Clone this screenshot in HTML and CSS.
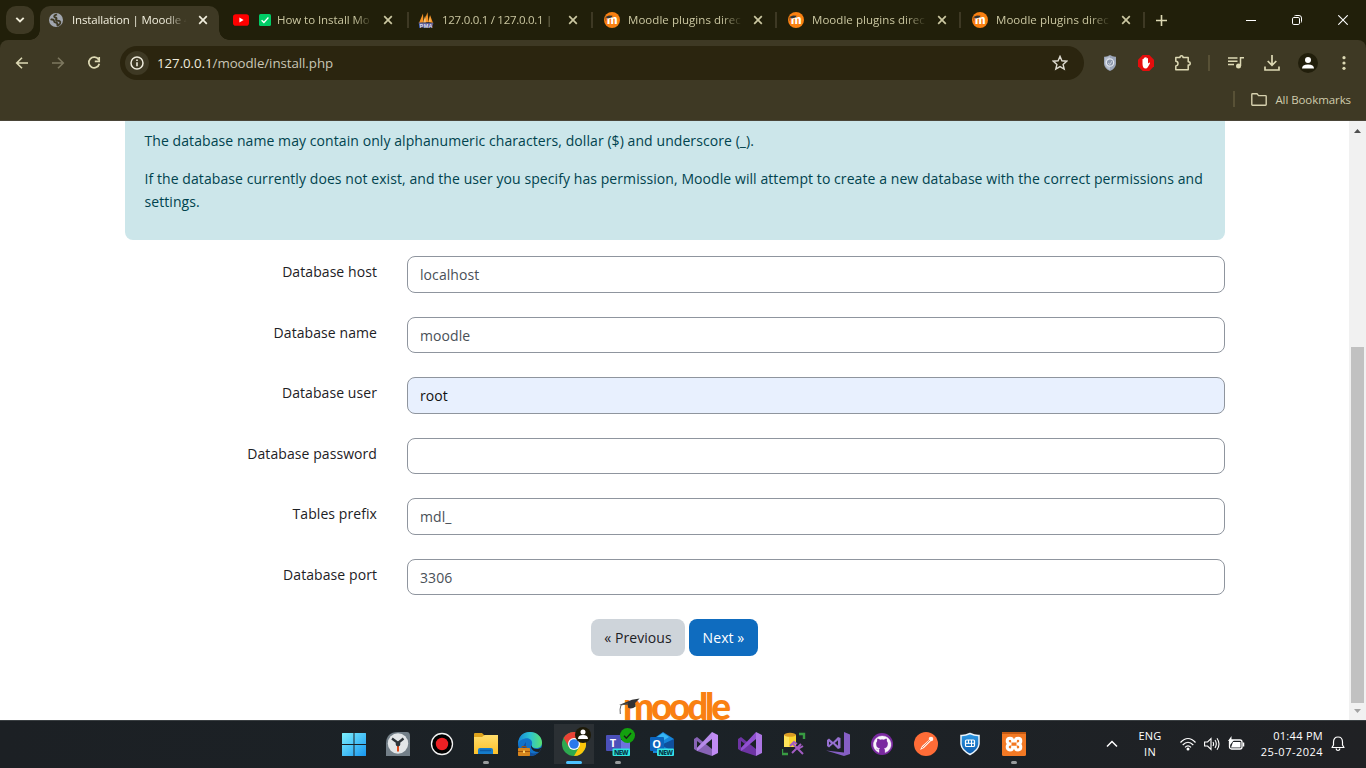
FILE: index.html
```html
<!DOCTYPE html>
<html lang="en">
<head>
<meta charset="utf-8">
<title>Installation | Moodle</title>
<link rel="stylesheet" href="styles.css">
</head>
<body>
<svg class="defs" width="0" height="0" aria-hidden="true">
  <defs>
    <linearGradient id="win" x1="0" y1="0" x2="1" y2="1"><stop offset="0" stop-color="#7df0fd"/><stop offset="1" stop-color="#1796f0"/></linearGradient>
    <linearGradient id="folder" x1="0" y1="0" x2="0" y2="1"><stop offset="0" stop-color="#ffdd6b"/><stop offset="1" stop-color="#fcc02a"/></linearGradient>
    <linearGradient id="edge" x1="0" y1="0" x2="1" y2="0"><stop offset="0" stop-color="#1586d6"/><stop offset=".5" stop-color="#2cc3d0"/><stop offset="1" stop-color="#5be070"/></linearGradient>
    <linearGradient id="shield" x1="0" y1="0" x2="0" y2="1"><stop offset="0" stop-color="#2f9be6"/><stop offset="1" stop-color="#0a59ac"/></linearGradient>
    <symbol id="close" viewBox="0 0 10 10"><path d="M1.2 1.2l7.6 7.6M8.8 1.2L1.2 8.8" fill="none" stroke="currentColor" stroke-width="1.7"/></symbol>
    <symbol id="mdl" viewBox="0 0 16 16"><circle cx="8" cy="8" r="8" fill="#f98012"/><text x="3" y="12" class="mdl-m" textLength="10.500" lengthAdjust="spacingAndGlyphs">m</text><path d="M1.300 5L5 3.500l3.600.3-.9 1.800-3.900.9z" fill="#333"/><path d="M1.700 5.200v3.600" stroke="#6a4522" stroke-width=".6"/></symbol>
  </defs>
</svg>
<div class="screen">
  <header class="tabstrip">
    <div class="tab-search"><svg width="10" height="8" viewBox="0 0 10 8"><path d="M1.300 1.800L5 5.500l3.700-3.700" fill="none" stroke="#efecd8" stroke-width="1.900"/></svg></div>
    <div class="tab active">
      <svg class="fav" viewBox="0 0 16 16"><circle cx="8" cy="8" r="7" fill="#a1a6ae"/><path d="M9 2.300C7.300 3 6 3.200 6.200 4.500c.2 1.100 1.700.8 2.200 1.500.5.700-.7 1.300-.3 2.200.6 1 2.400.3 3.500.9.900.5.900 1.300.5 2.200-.5 1-1.500 1.800-2.600 2.100-.6-.6.200-1.500-.4-2.300-.6-.7-2-.5-2.700-1.300-.5-.6-.2-1.500-.9-1.900-.8-.5-2-.2-2.900-.7" fill="none" stroke="#3e3924" stroke-width="1.900"/></svg>
      <span class="title t1">Installation | Moodle 4</span><svg class="x"><use href="#close"/></svg>
    </div>
    <div class="tab">
      <svg class="fav" viewBox="0 0 16 16"><rect y="2.300" width="16" height="11.400" rx="2.800" fill="#f00"/><path d="M6.400 5.600l4.200 2.400-4.200 2.400z" fill="#fff"/></svg>
      <svg class="check" viewBox="0 0 12 12"><rect width="12" height="12" rx="1.500" fill="#00cc66"/><path d="M2.600 6.200l2.300 2.300 4.500-5" fill="none" stroke="#fff" stroke-width="1.300"/></svg>
      <span class="title t2">How to Install Mo</span><svg class="x"><use href="#close"/></svg>
    </div>
    <div class="tab">
      <svg class="fav" viewBox="0 0 16 16"><path d="M1 11L5 1.500 5.500 10.500zM5.700 10.500C7 7 8.500 3 9.500.300L10.500 10zM10.500 10L12 3l3 8z" fill="#f79324"/><path d="M5.200 10.500l2-7 .7 7zM11 9.500l1-5.500.6 6z" fill="#fbc36e"/><path d="M.5 10.500l15 .3-1.500 4.700H2z" fill="#5b5d91"/><text x="1.600" y="15.600" class="pma" textLength="13">PMA</text></svg>
      <span class="title t3">127.0.0.1 / 127.0.0.1 |</span><svg class="x"><use href="#close"/></svg>
    </div>
    <div class="tab"><svg class="fav"><use href="#mdl"/></svg><span class="title">Moodle plugins direc</span><svg class="x"><use href="#close"/></svg></div>
    <div class="tab"><svg class="fav"><use href="#mdl"/></svg><span class="title">Moodle plugins direc</span><svg class="x"><use href="#close"/></svg></div>
    <div class="tab"><svg class="fav"><use href="#mdl"/></svg><span class="title">Moodle plugins direc</span><svg class="x"><use href="#close"/></svg></div>
    <svg class="plus" viewBox="0 0 11 11"><path d="M5.500 0v11M0 5.500h11" stroke="#ddd9b4" stroke-width="1.600"/></svg>
    <div class="winctl">
      <span><svg width="10" height="10"><path d="M0 5.500h10" stroke="#fff"/></svg></span>
      <span><svg width="10" height="10" viewBox="0 0 10 10"><g fill="none" stroke="#fff"><rect x=".5" y="2.500" width="7" height="7" rx="1.300"/><path d="M2.500.8Q3 .5 3.500.5H7Q9.500.5 9.500 3v3.500q0 .5-.3 1"/></g></svg></span>
      <span><svg width="10" height="10"><path d="M.3.3l9.400 9.400M9.700.3L.3 9.700" stroke="#fff" stroke-width="1.100"/></svg></span>
    </div>
  </header>

  <div class="chrome">
    <div class="toolbar">
      <div class="nav">
        <svg class="ic" viewBox="0 0 16 16"><path d="M14 8H2.800M8 2.700L2.700 8 8 13.300" fill="none" stroke="#ddd9b4" stroke-width="1.600"/></svg>
        <svg class="ic" viewBox="0 0 16 16"><path d="M2 8h11.200M8 2.700L13.300 8 8 13.300" fill="none" stroke="#7d785f" stroke-width="1.600"/></svg>
        <svg class="ic" viewBox="0 0 16 16"><path d="M12.600 4.600A5.300 5.300 0 1 0 13.300 8.700M13.200 2v4.400H8.800" fill="none" stroke="#ddd9b4" stroke-width="1.700"/></svg>
      </div>
      <div class="omnibox">
        <span class="info"><svg width="14" height="14" viewBox="0 0 14 14"><circle cx="7" cy="7" r="6" fill="none" stroke="#eeebdc" stroke-width="1.500"/><path d="M7 6.200v4M7 3.500V5" stroke="#eeebdc" stroke-width="1.600"/></svg></span>
        <span class="url">127.0.0.1<i>/moodle/install.php</i></span>
        <svg class="ic star" viewBox="0 0 16 16"><path d="M8 1.400l1.900 4.400 4.800.4-3.600 3.200 1.100 4.700L8 11.600l-4.200 2.500 1.100-4.700L1.300 6.200l4.800-.4z" fill="none" stroke="#dedbd0" stroke-width="1.400"/></svg>
      </div>
      <div class="ext">
        <svg class="ic" viewBox="0 0 16 16"><path d="M8 0q3 2 6 1.700V9q-.5 4.500-6 7-5.500-2.500-6-7V1.700Q5 2 8 0z" fill="#9ba5b8"/><path d="M8 1v14q-4.500-2-5-6V2.500Q5.500 2.500 8 1z" fill="#b6becd"/><circle cx="8" cy="7.500" r="3.700" fill="#8b96ab" stroke="#e1e6ee" stroke-width="1.200"/><path d="M6 8l2 1.500 2-3.500" fill="none" stroke="#c8d0dc"/></svg>
        <svg class="ic" viewBox="0 0 16 16"><path d="M4.700 0h6.600L16 4.700v6.600L11.300 16H4.700L0 11.300V4.700z" fill="#e50d0d"/><path d="M4.500 7.500V4.300q.7-.9 1.300 0V3q.7-1 1.400 0v-.6q.7-.9 1.400 0V3.500q.7-1 1.400 0V8.500l1.300-1q.9.1.6.9l-2 3.600q-.8 1.500-2.300 1.500Q4.700 13.500 4.500 9z" fill="#fff"/></svg>
        <svg class="ic wide" viewBox="0 0 18 16"><path d="M1.800 2.500H6Q5.900.8 7.500.8T9 2.500h5.200v4.200q2 0 2 1.700t-2 1.700v4.700H1.800V11Q4 10.800 4 8.600T1.800 6.300z" fill="none" stroke="#ddd9b4" stroke-width="1.500" stroke-linejoin="round"/></svg>
        <b class="vbar"></b>
        <svg class="ic" viewBox="0 0 16 16"><path d="M0 3h9.500M0 6.300h9.500M0 9.600h6M12.500 11V2.800H16" fill="none" stroke="#ddd9b4" stroke-width="1.500"/><circle cx="10.500" cy="11" r="2.500" fill="#ddd9b4"/></svg>
        <svg class="ic" viewBox="0 0 16 16"><path d="M8 0v10M3.700 6L8 10.300 12.300 6M1 11.500V15h14v-3.500" fill="none" stroke="#ddd9b4" stroke-width="1.700"/></svg>
        <span class="avatar"><svg width="14" height="14" viewBox="0 0 14 14"><circle cx="7" cy="4" r="3" fill="#fff"/><path d="M1 12.500q0-4 6-4t6 4z" fill="#fff"/></svg></span>
        <svg class="ic" viewBox="0 0 16 16"><g fill="#ddd9b4"><circle cx="8" cy="2.700" r="1.600"/><circle cx="8" cy="8" r="1.600"/><circle cx="8" cy="13.300" r="1.600"/></g></svg>
      </div>
    </div>
    <div class="bookmarks"><b class="vbar"></b><svg width="16" height="13" viewBox="0 0 16 13"><path d="M.8 1.500Q.8.8 1.500.8H6l1.600 1.800h6.900q.7 0 .7.700v8.200q0 .7-.7.700h-13q-.7 0-.7-.7z" fill="none" stroke="#d5d0ad" stroke-width="1.400"/></svg><span>All Bookmarks</span></div>
  </div>

  <div class="viewport">
    <main class="page">
      <section class="alert">
        <p class="p1">The database name may contain only alphanumeric characters, dollar ($) and underscore (_).</p>
        <p class="p2">If the database currently does not exist, and the user you specify has permission, Moodle will attempt to create a new database with the correct permissions and settings.</p>
      </section>
      <form class="form">
        <div class="row"><label>Database host</label><div class="field">localhost</div></div>
        <div class="row"><label>Database name</label><div class="field">moodle</div></div>
        <div class="row"><label>Database user</label><div class="field filled">root</div></div>
        <div class="row"><label>Database password</label><div class="field"></div></div>
        <div class="row"><label>Tables prefix</label><div class="field">mdl_</div></div>
        <div class="row"><label>Database port</label><div class="field">3306</div></div>
        <div class="buttons"><button type="button" class="btn prev">« Previous</button><button type="button" class="btn next">Next »</button></div>
      </form>
      <svg class="logo" width="116" height="30" viewBox="0 0 116 30"><text x="5" y="28" textLength="108">moodle</text><path d="M1 13L14 7.800l7.600-1.400-4.500 4.600.6 3.500q-4 3-7.500 1.300l-.6-3.300z" fill="#333"/><path d="M3 13l7-1.500M3 13q-1.500 4-.7 9" fill="none" stroke="#555" stroke-width=".9"/></svg>
    </main>
    <div class="scroll"><svg width="7" height="4"><path d="M0 4L3.500 0 7 4z" fill="#505050"/></svg><i></i><svg width="7" height="4"><path d="M0 0h7L3.500 4z" fill="#a3a3a3"/></svg></div>
  </div>

  <footer class="taskbar">
    <div class="apps">
      <span><svg viewBox="0 0 24 24"><path d="M0 1.500q0-.5.500-.5H11.500v11H0zM12.500 1h11q.5 0 .5.500V12H12.500zM0 13h11.500v11H.500Q0 24 0 23.500zM12.500 13H24v10.500q0 .5-.5.500h-11z" fill="url(#win)"/></svg></span>
      <span><svg viewBox="0 0 24 24"><path d="M0 12Q0 0 12 0h9q3 0 3 4v20H0z" fill="#737f88"/><circle cx="12" cy="11.500" r="10.200" fill="#e2e5e7"/><path d="M12 12v7.500" stroke="#e34b19" stroke-width="2"/><path d="M6 6.500l6 4.500 5.500-4.500" fill="none" stroke="#2d3439" stroke-width="2.300"/><circle cx="12" cy="12" r="2.400" fill="#30373c"/></svg></span>
      <span><svg viewBox="0 0 24 24"><circle cx="12" cy="12" r="10.500" fill="#000" stroke="#f3f3f3" stroke-width="1.300"/><circle cx="12" cy="12" r="6.200" fill="#ed2024"/></svg></span>
      <span class="open"><svg viewBox="0 0 24 24"><path d="M0 2q0-1 1-1h7l2 2v3H0z" fill="#dda21b"/><path d="M0 5h8l2.500-2H24v19H0z" fill="url(#folder)"/><path d="M4 22v-4q0-2 2-2h11q2 0 2 2v4z" fill="#157ccb"/><path d="M6 18.500h11" stroke="#0e5ba4" stroke-width="1.500"/></svg></span>
      <span><svg viewBox="0 0 24 24"><circle cx="12" cy="12" r="12" fill="#1272c8"/><path d="M0 12Q1 0 12 0c7 0 12 5 12 10.500 0 5-4 6-7 5.500-3-.4-4-2-3-3.500C15 8 11 5.500 7 6.500 3 7.500 1 9 0 12z" fill="url(#edge)"/><path d="M8 10q-1 6 3 9.500T21 20Q17 24 12 24 5 23 4 16z" fill="#124f9e"/><path d="M13.500 13q.5 4.500 6.500 4l4-1.500-3 4.500q-7 0-8-5z" fill="#1b2227"/><rect y="16" width="12" height="8" rx=".8" fill="#d8861d"/><path d="M4 16v-1.500h4V16M0 19.500h12" fill="none" stroke="#9c520d"/><rect x="5" y="18.500" width="2" height="2.500" fill="#ffd062"/></svg></span>
      <span class="current"><svg viewBox="0 0 24 24"><circle cx="12" cy="12" r="12" fill="#2da94f"/><path d="M1.600 6A12 12 0 0 1 22.400 6H12z" fill="#e94235"/><path d="M1.600 6l5.300 9 5.100-9z" fill="#e94235"/><path d="M22.400 6A12 12 0 0 1 12 24l5.200-9L12 6z" fill="#fdc60a"/><circle cx="12" cy="12" r="6" fill="#fff"/><circle cx="12" cy="12" r="4.800" fill="#2979ec"/></svg><svg class="badge user" viewBox="0 0 16 16"><circle cx="8" cy="8" r="8" fill="#1d1a08"/><circle cx="8" cy="5" r="2.500" fill="#fff"/><path d="M3 12q0-4 5-4t5 4z" fill="#fff"/></svg></span>
      <span class="open"><svg viewBox="0 0 24 24"><circle cx="18" cy="4" r="3.500" fill="#7b83eb"/><path d="M10 8h14v9q-1 7-7 7t-7-6z" fill="#6d73df"/><rect y="3" width="15" height="16" rx="1" fill="#4b50ba"/><text x="3.700" y="14.500" class="app-letter">T</text><rect x="6.500" y="16.500" width="17.500" height="7.500" rx="1" fill="#2ee5e0"/><text x="8" y="22.700" class="new" textLength="14.500">NEW</text></svg><svg class="badge ok" viewBox="0 0 16 16"><circle cx="8" cy="8" r="8" fill="#13a10e"/><path d="M4.300 8.300l2.500 2.500 5-5.500" fill="none" stroke="#182018" stroke-width="1.500"/></svg></span>
      <span><svg viewBox="0 0 24 24"><path d="M3 7L13 0l11 7v14H3z" fill="#1684d9"/><path d="M7 5l6-4 6 4-8 5z" fill="#36b5f3"/><path d="M24 7v13L11 13z" fill="#0f4f9c"/><rect y="5" width="14" height="14" rx="1" fill="#0c64bd"/><text x="2.300" y="15.500" class="app-letter">O</text><rect x="7" y="16.500" width="17" height="7.500" rx="1" fill="#37e3e6"/><text x="8.500" y="22.700" class="new" textLength="14.500">NEW</text></svg></span>
      <span><svg viewBox="0 0 24 24"><path d="M0 7l3-2 15 12v7L3 19 0 17zM3 9v7l4-4z" fill="#8763b5" fill-rule="evenodd"/><path d="M18 0L3 16v3l3-2L18 7z" fill="#b68bea"/><path d="M18 0l6 3v18l-6 3z" fill="#c18cf4"/></svg></span>
      <span><svg viewBox="0 0 24 24"><path d="M0 7l3-2 15 12v7L3 19 0 17zM3 9v7l4-4z" fill="#6d34a3" fill-rule="evenodd"/><path d="M18 0L3 16v3l3-2L18 7z" fill="#9150d1"/><path d="M18 0l6 3v18l-6 3z" fill="#ad76e4"/></svg></span>
      <span><svg viewBox="0 0 24 24"><path d="M2 3h12v12H2z" fill="#fbd62e"/><path d="M2 3h5v12H2z" fill="#ffe45a"/><ellipse cx="8" cy="2.800" rx="6" ry="2" fill="#db9c24"/><path d="M17 2h5v5M0 17v5h6" fill="none" stroke="#389a42" stroke-width="2.400"/><path d="M10 21l9-9M11 12l10 10M8 14l4-4 3 2M16 17l5-3" fill="none" stroke="#a25cc3" stroke-width="2"/></svg></span>
      <span><svg viewBox="0 0 24 24"><path d="M18 0l6 2.500V22l-6 2-18-5.500 18 2z" fill="#865fc5"/><path d="M1 8l2-1.500L7 10l5-5 2.500 1v10L12 17l-5-5-4 3.500L1 14zM3 9.500v3.500l2-1.800zM12 8.300L8.800 11l3.200 2.700z" fill="#9670d0" fill-rule="evenodd"/></svg></span>
      <span><svg viewBox="0 0 24 24"><circle cx="12" cy="12" r="11" fill="#7a2aa0"/><path d="M12 4a8.500 8.500 0 0 0-3 16.500v-2.700q-2.500.3-3.200-1.300l1.500.5 1.700.4.700-1C6.500 16 6 14 6.300 11q.2-1.200 1-2-.4-1.400.1-2.500 1.200 0 2.600 1 2-.5 4 0 1.500-1 2.700-1 .5 1.100 0 2.500 1 1 1.100 2.200c.2 3-.8 4.800-3.500 5.200q.8.800.8 2v2.200A8.500 8.500 0 0 0 12 4z" fill="#f8f4fb" stroke="#f8f4fb" stroke-width=".4"/><path d="M7.500 7q1.300.2 2.500 1.100 2-.5 4 0 1.300-.9 2.500-1.100.4 1 .1 2 1 1 1 2.500c0 3-1.800 4-4 4.300q.6.700.6 1.700v3h-4.400v-3q0-1 .6-1.700c-2.200-.3-4-1.300-4-4.300q0-1.500 1-2.500-.3-1 .1-2z" fill="#7a2aa0"/></svg></span>
      <span><svg viewBox="0 0 24 24"><circle cx="12" cy="12" r="12" fill="#ff6c37"/><path d="M6 18l2-4 8-7 1.500 1.500-7.500 7.500z" fill="#fff4ee"/><circle cx="17" cy="7" r="2.300" fill="#fff4ee"/><path d="M8 16l8-8" stroke="#d95d31" stroke-width=".7"/></svg></span>
      <span><svg viewBox="0 0 24 24"><path d="M12 1.500q5 2.300 9 2v8.500q-.5 6-9 10.500Q3.500 18 3 12V3.500Q7 3.800 12 1.500z" fill="url(#shield)" stroke="#eaf4fc" stroke-width="1.500"/><rect x="7.500" y="8" width="9" height="6.500" rx="1" fill="none" stroke="#fff" stroke-width="1.200"/><path d="M7.500 11.300h9M10.500 8v3.300M13.500 8v6.500" stroke="#fff"/></svg></span>
      <span class="open"><svg viewBox="0 0 24 24"><rect width="24" height="24" rx="1.500" fill="#f37924"/><path d="M0 1h24" stroke="#c55a13" stroke-width="2"/><path d="M9.500 12H8q-2.800-.4-2.800-3T8 6.300q2.700 0 2.700 2.800h2.600q0-2.800 2.700-2.800 2.800 0 2.800 2.700T16 12h-1.500M9.500 12H8q-2.800.4-2.800 3T8 17.900q2.700 0 2.700-2.700h2.600q0 2.700 2.700 2.700 2.800 0 2.800-2.800T16 12h-1.500" fill="none" stroke="#fff" stroke-width="3"/></svg></span>
    </div>
    <div class="tray">
      <svg class="chev" width="12" height="8" viewBox="0 0 12 8"><path d="M1 6.500l5-5 5 5" fill="none" stroke="#fff" stroke-width="1.500"/></svg>
      <div class="lang">ENG<br>IN</div>
      <svg width="16" height="14" viewBox="0 0 16 14"><g fill="none" stroke="#fff" stroke-width="1.200"><path d="M.5 5.500Q8-2.500 15.500 5.500M2.700 8Q8 2.500 13.300 8M5 10.300q3-3 6 0"/></g><circle cx="8" cy="12" r="1.500" fill="#fff"/></svg>
      <svg width="16" height="14" viewBox="0 0 16 14"><path d="M.6 5h3L7 1.500v11L3.600 9h-3zM9 5q1.200 2 0 4M11 3q2.600 4 0 8M13 1.200q4 5.800 0 11.600" fill="none" stroke="#fff" stroke-width="1.100"/></svg>
      <svg width="17" height="15" viewBox="0 0 17 15"><rect x="1.500" y="4" width="12.500" height="9" rx="2" fill="none" stroke="#fff" stroke-width="1.300"/><path d="M5 6h7.500v5.500H3z" fill="#fff"/><path d="M15.500 6.500v4" stroke="#fff" stroke-width="1.500"/><path d="M3.500 0L0 5h2v4l4-5H3.500z" fill="#fff"/></svg>
      <div class="clock"><span class="time">01:44 PM</span><br>25-07-2024</div>
      <svg class="bell" width="14" height="16" viewBox="0 0 14 16"><path d="M1 11.500L2.500 9V6q0-5 4.500-5t4.500 5v3l1.500 2.500zM5 12.500q.5 2 2 2t2-2" fill="none" stroke="#fff" stroke-width="1.200" stroke-linejoin="round"/></svg>
    </div>
  </footer>
</div>
</body>
</html>
```
FILE: styles.css
```css
* { box-sizing: border-box; }
body { margin: 0; font-family: "Open Sans", "Noto Sans", sans-serif; }
svg { display: block; flex: none; }
.defs { position: absolute; }
.screen { width: 1366px; height: 768px; display: flex; flex-direction: column; overflow: hidden; background: linear-gradient(#211f0a 60px, #fff 60px); }

.tabstrip { height: 40px; flex: none; display: flex; align-items: center; background: #211f0a; padding-left: 6px; }
.tab-search { width: 28px; height: 28px; border-radius: 10px; background: #3e3924; display: flex; align-items: center; justify-content: center; margin-right: 6px; }
.tab { width: 184px; height: 40px; display: flex; align-items: center; padding-left: 11px; color: #cbc7a1; background: linear-gradient(#3e3924, #3e3924) right 0 center / 2px 16px no-repeat; }
.tab.active { position: relative; width: 179px; margin-right: 5px; height: 34px; align-self: flex-end; padding-left: 8px; padding-bottom: 6px; border-radius: 10px 10px 0 0; background: #3e3924; color: #f1eedd; }
.tab.active::before, .tab.active::after { content: ""; position: absolute; bottom: 0; width: 10px; height: 10px; }
.tab.active::before { left: -10px; background: radial-gradient(circle at 0 0, transparent 9.500px, #3e3924 10px); }
.tab.active::after { right: -10px; background: radial-gradient(circle at 100% 0, transparent 9.500px, #3e3924 10px); }
.tab:nth-child(3) { width: 185px; padding-left: 9px; }
.tab:nth-child(4) { padding-left: 9px; }
.fav { width: 16px; height: 16px; }
.check { width: 12px; height: 12px; margin-left: 10px; }
.title { font-size: 11.500px; line-height: 18px; width: 117px; margin-left: 8px; white-space: nowrap; letter-spacing: 0.05px; -webkit-mask-image: linear-gradient(90deg, #000 80%, transparent 98%); mask-image: linear-gradient(90deg, #000 80%, transparent 98%); }
.title.t1 { width: 117px; letter-spacing: -0.15px; }
.title.t2 { width: 97px; margin-left: 6px; letter-spacing: -0.05px; }
.title.t3 { width: 112px; margin-right: 5px; letter-spacing: -0.28px; -webkit-mask-image: linear-gradient(90deg, #000 88%, transparent 104%); mask-image: linear-gradient(90deg, #000 88%, transparent 104%); }
.x { width: 10px; height: 10px; margin-left: 9px; }
.tab:nth-child(n+5) .x { margin-left: 8px; }
.plus { width: 11px; height: 11px; margin-left: 11px; }
.winctl { margin-left: auto; display: flex; }
.winctl span { width: 46px; display: flex; justify-content: center; }
.mdl-m { font: 800 11.500px "Inter", sans-serif; fill: #fff; }
.pma { font: 700 5.500px "Liberation Sans", sans-serif; fill: #dcdcf0; }

.chrome { height: 81px; flex: none; background: #3e3924; border-bottom: 1px solid #4a4538; border-radius: 8px 8px 0 0; }
.toolbar { height: 46px; display: flex; align-items: center; }
.nav { display: flex; gap: 20px; padding-left: 14px; width: 120px; }
.ic { width: 16px; height: 16px; }
.omnibox { width: 964px; height: 34px; border-radius: 17px; background: #2b250f; display: flex; align-items: center; padding: 0 16px 0 5px; }
.info { width: 24px; height: 24px; border-radius: 50%; background: #3e3924; display: flex; align-items: center; justify-content: center; }
.url { flex: 1; margin-left: 8px; font-size: 13.300px; letter-spacing: -0.060px; color: #efecdd; }
.url i { font-style: normal; color: #c9c6b6; }
.ext { display: flex; align-items: center; padding-left: 18px; }
.ext > :nth-child(2) { margin-left: 20px; }
.wide { width: 18px; margin-left: 20px; }
.vbar { width: 2px; height: 16px; background: #585136; }
.ext .vbar { margin: 0 19px 0 16px; }
.ext .vbar + .ic { margin-left: -1px; }
.ext .vbar ~ .ic + .ic { margin-left: 20px; }
.avatar { width: 20px; height: 20px; border-radius: 50%; background: #211e0b; display: flex; align-items: center; justify-content: center; margin: 0 18px; }
.bookmarks { height: 28px; display: flex; align-items: center; justify-content: flex-end; padding: 0 15px 2px 0; color: #d0ccac; font-size: 11.500px; letter-spacing: -0.080px; }
.bookmarks svg { margin: 0 8px 0 16px; }

.viewport { height: 599px; flex: none; display: flex; background: #fff; overflow: hidden; }
.page { width: 1349px; padding-left: 125px; height: 599px; overflow: hidden; font-size: 14px; letter-spacing: 0.075px; }
.alert { width: 1100px; height: 119px; background: #cce6ea; color: #00434e; border-radius: 0 0 8px 8px; padding: 8px 19.500px 0; line-height: 23px; }
.alert p { margin: 0 0 15px; }
.form { width: 1100px; padding-top: 16.300px; }
.row { display: flex; height: 36.500px; margin-bottom: 24px; }
.row label { width: 252px; margin-right: 30px; text-align: right; line-height: 22px; padding-top: 5px; color: #1d2125; }
.field { flex: 1; height: 36.500px; border: 1px solid #8f959e; border-radius: 8px; padding-left: 12px; line-height: 35px; color: #495057; background: #fff; }
.filled { background: #e8f0fe; color: #111; }
.buttons { display: flex; gap: 4px; padding-left: 466px; }
.btn { height: 37px; border: 0; border-radius: 8px; font: 14px "Open Sans", "Noto Sans", sans-serif; letter-spacing: 0.080px; padding: 0; text-align: center; white-space: nowrap; }
.prev { width: 94px; background: #ced4da; color: #1d2125; }
.next { width: 69px; background: #0f6cbf; color: #fff; }
.logo { margin: 35.500px 0 0 493px; }
.logo text { font: 900 37px "Lato", sans-serif; fill: #f98012; letter-spacing: 0; }
.scroll { width: 17px; height: 599px; background: #f1f1f1; display: flex; flex-direction: column; align-items: center; padding: 8px 1px 7px 0; }
.scroll i { width: 13px; height: 356px; margin: 214px 0 6px; background: #c1c1c1; }

.taskbar { height: 48px; flex: none; background: linear-gradient(90deg, #1c2024, #1b2227 50%, #202124); border-top: 1px solid #3a3f42; display: flex; justify-content: space-between; padding-left: 332px; }
.apps { display: flex; }
.apps > span { position: relative; width: 44px; height: 47px; display: flex; align-items: center; justify-content: center; padding-bottom: 1px; }
.apps > span > svg { width: 24px; height: 24px; }
.apps > span:first-child { padding-right: 1px; }
.apps > .current { background: linear-gradient(#2b3034, #2b3034) center 3px / 40px 40px no-repeat; }
.open::after, .current::after { content: ""; position: absolute; left: 19px; bottom: 4px; width: 6px; height: 3px; border-radius: 2px; background: #989b9d; }
.current::after { left: 14px; width: 16px; background: #4cc2ff; }
.apps .badge { position: absolute; width: 16px; height: 16px; left: 23px; top: 6px; }
.apps .ok { width: 15px; height: 15px; left: 24px; top: 7px; }
.app-letter { font: 700 11px "Open Sans", sans-serif; fill: #fff; }
.new { font: 800 6.500px "Open Sans", sans-serif; fill: #073b4c; }
.tray { display: flex; align-items: center; color: #fff; font-size: 11px; line-height: 16px; padding: 0 21px 2px 0; }
.chev { margin-right: 19px; }
.lang { width: 26px; text-align: center; margin-right: 17px; letter-spacing: 0.2px; }
.tray svg + svg { margin-left: 8px; }
.clock { width: 70px; text-align: right; margin: 0 8px 0 8px; white-space: nowrap; letter-spacing: 0.48px; }
.time { letter-spacing: 0.3px; }
```
